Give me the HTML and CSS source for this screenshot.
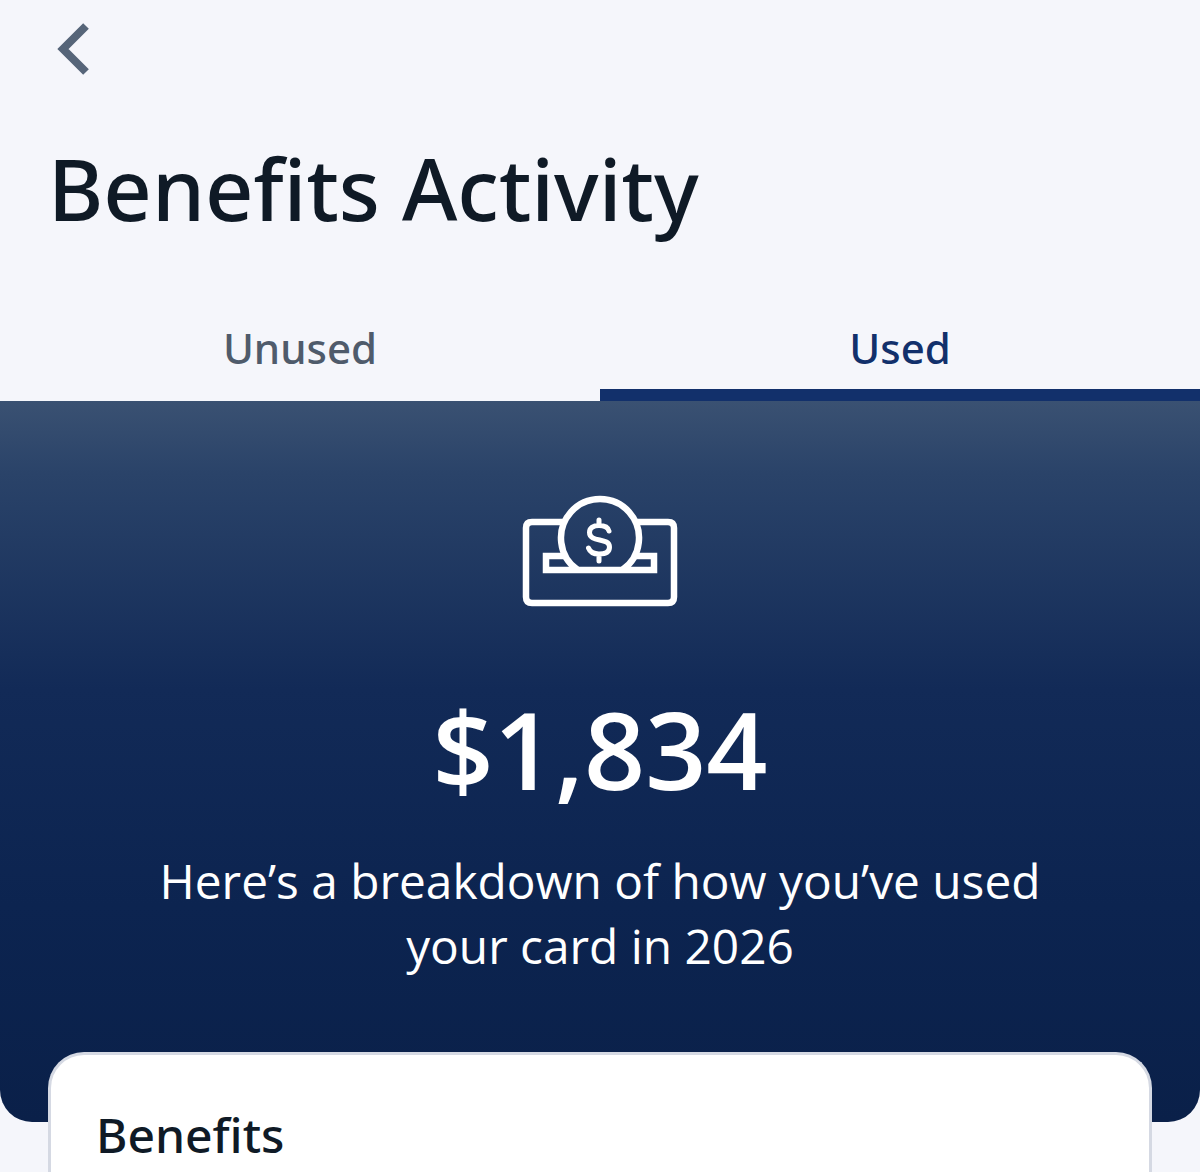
FILE: index.html
```html
<!DOCTYPE html>
<html lang="en">
<head>
<meta charset="utf-8">
<title>Benefits Activity</title>
<link rel="stylesheet" href="styles.css">
</head>
<body>
<main class="screen">
  <header class="header">
    <button class="back" aria-label="Back">
      <svg width="36" height="52" viewBox="0 0 36 52"><path d="M30 3 L7 26 L30 49" fill="none" stroke="#566579" stroke-width="8"/></svg>
    </button>
    <h1 class="title">Benefits Activity</h1>
  </header>
  <nav class="tabs">
    <div class="tab">Unused</div>
    <div class="tab tab-active">Used</div>
  </nav>
  <section class="hero">
    <svg class="hero-icon" width="156" height="112" viewBox="0 0 156 112" fill="none" stroke="#fff" stroke-width="6.5">
      <path d="M42.4 27 H10 Q4 27 4 33 V102 Q4 108 10 108 H146 Q152 108 152 102 V33 Q152 27 146 27 H113.6"/>
      <path d="M43.4 61 H24 V75 H132 V61 H112.6"/>
      <path d="M55.7 75 A39 39 0 1 1 100.3 75"/>
      <path d="M87 36 C86 32 82 30.5 77 30.5 C71 30.5 67.5 33 67.5 37.5 C67.5 48 87.5 42 87.5 52 C87.5 57 83 59 77 59 C71 59 68 57 66.5 53 M77 25 V30 M77 59 V66" stroke-width="5" stroke-linecap="round"/>
    </svg>
    <div class="amount">$1,834</div>
    <p class="caption">Here’s a breakdown of how you’ve used<br>your card in 2026</p>
  </section>
  <section class="card">
    <h2 class="card-title">Benefits</h2>
  </section>
</main>
</body>
</html>
```
FILE: styles.css
```css
* { box-sizing: border-box; }
html, body { margin: 0; height: 100%; }
body {
  background: #f5f6fb;
  font-family: "Open Sans", "Noto Sans", sans-serif;
  overflow: hidden;
}
.screen { width: 1200px; height: 1172px; overflow: hidden; }
.header { height: 322px; padding: 23px 0 0 48px; }
.back {
  display: block;
  width: 36px;
  height: 52px;
  margin-left: 8px;
  padding: 0;
  border: 0;
  background: none;
}
.back svg { display: block; }
.title {
  margin: 64px 0 0;
  font-family: "Noto Sans", "Open Sans", sans-serif;
  font-size: 84.6px;
  line-height: 100px;
  font-weight: 500;
  color: #0f1a26;
}
.tabs { display: grid; grid-template-columns: 1fr 1fr; height: 79px; }
.tab {
  margin-top: -1px;
  text-align: center;
  font-family: "Noto Sans", "Open Sans", sans-serif;
  font-size: 42px;
  line-height: 54px;
  font-weight: 500;
  color: #4f5b6b;
}
.tab-active { color: #12306b; border-bottom: 12px solid #12306b; height: 80px; }
.hero {
  height: 721px;
  padding-top: 92px;
  display: flex;
  flex-direction: column;
  align-items: center;
  color: #fff;
  border-radius: 0 0 32px 32px;
  background: linear-gradient(to bottom, #3a5172 0%, #2a4369 10%, #122a57 40%, #0c2450 70%, #0a2049 100%);
}
.hero-icon { display: block; margin-top: 2px; }
.amount {
  margin-top: 77px;
  font-size: 107px;
  line-height: 130px;
  font-weight: 600;
}
.caption {
  margin: 34px 0 0;
  text-align: center;
  font-size: 47.8px;
  line-height: 65px;
  font-weight: 400;
}
.card {
  position: relative;
  margin: -70px 48px 0;
  height: 200px;
  padding: 50px 45px 0;
  background: #fff;
  border: 3px solid #d5d9e3;
  border-bottom: 0;
  border-radius: 36px 36px 0 0;
}
.card-title {
  margin: 0;
  font-family: "Noto Sans", "Open Sans", sans-serif;
  font-size: 48px;
  line-height: 60px;
  font-weight: 500;
  color: #0f1a26;
}
```
